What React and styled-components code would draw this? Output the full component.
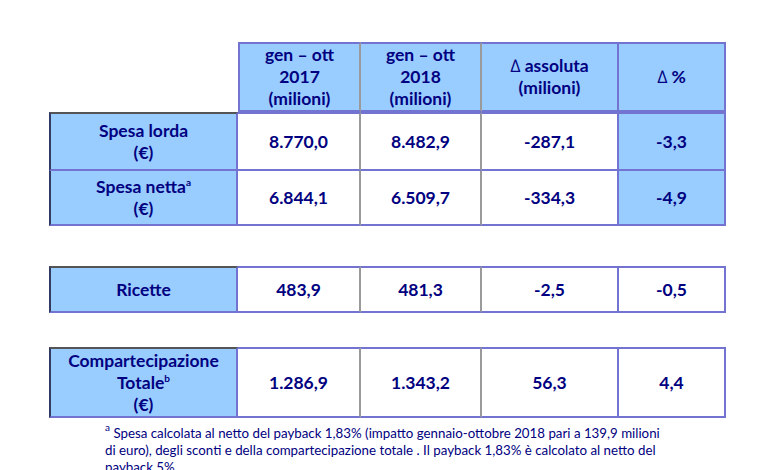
import styled, { createGlobalStyle } from "styled-components";

const Global = createGlobalStyle`
  html, body {
    margin: 0;
    padding: 0;
    background: #ffffff;
  }
  body {
    font-family: Lato, "Open Sans", sans-serif;
    color: #000080;
  }
`;

const COLS = "189px 123px 121px 137px 107px";
const BLUE = "#99ccff";
const EDGE = "#7373d1";
const GREY = "#9a9a9a";

const Page = styled.div`
  padding: 42px 0 0 49px;
  width: 780px;
  height: 470px;
  box-sizing: border-box;
  overflow: hidden;
`;

const Table = styled.div`
  display: grid;
  grid-template-columns: ${COLS};
  width: 677px;
  margin-top: ${(p) => p.$gap || 0}px;
`;

const Cell = styled.div`
  box-sizing: border-box;
  height: ${(p) => p.$h}px;
  display: flex;
  align-items: center;
  justify-content: center;
  text-align: center;
  font-weight: 700;
  font-size: 17.5px;
  line-height: 22px;
  background: ${(p) => (p.$blue ? BLUE : "#ffffff")};
  border-bottom: 2px solid ${EDGE};
  border-right: 2px solid ${(p) => (p.$soft ? GREY : EDGE)};
  border-top: ${(p) => (p.$top ? `2px solid ${p.$topColor || EDGE}` : "none")};
  border-left: ${(p) => (p.$left ? `2px solid ${p.$leftColor || EDGE}` : "none")};
`;

const Blank = styled.div`
  height: ${(p) => p.$h}px;
`;

const Delta = styled.span`
  font-weight: 400;
`;

const Sup = styled.sup`
  font-size: 10px;
  line-height: 0;
  vertical-align: 7px;
`;

const Note = styled.p`
  margin: 7px 0 0 56px;
  font-size: 13.3px;
  line-height: 17px;
  color: #000080;
`;

function Row({ label, values, h, top }) {
  return (
    <>
      <Cell $h={h} $blue $left $leftColor="#333a66" $top={top} $topColor="#555">
        <div>{label}</div>
      </Cell>
      <Cell $h={h} $soft $top={top}>{values[0]}</Cell>
      <Cell $h={h} $soft $top={top}>{values[1]}</Cell>
      <Cell $h={h} $top={top}>{values[2]}</Cell>
      <Cell $h={h} $blue={values.blue} $top={top}>{values[3]}</Cell>
    </>
  );
}

export default function App() {
  const r1 = ["8.770,0", "8.482,9", "-287,1", "-3,3"];
  r1.blue = true;
  const r2 = ["6.844,1", "6.509,7", "-334,3", "-4,9"];
  r2.blue = true;

  return (
    <Page>
      <Global />
      <Table>
        <Blank $h={70} />
        <Cell $h={70} $blue $top $left $soft>
          <div>gen – ott<br />2017<br />(milioni)</div>
        </Cell>
        <Cell $h={70} $blue $top $soft>
          <div>gen – ott<br />2018<br />(milioni)</div>
        </Cell>
        <Cell $h={70} $blue $top>
          <div><Delta>∆</Delta> assoluta<br />(milioni)</div>
        </Cell>
        <Cell $h={70} $blue $top>
          <div><Delta>∆</Delta> %</div>
        </Cell>

        <Row
          h={59}
          top
          label={<>Spesa lorda<br />(€)</>}
          values={r1}
        />
        <Row
          h={55}
          label={<>Spesa netta<Sup>a</Sup><br />(€)</>}
          values={r2}
        />
      </Table>

      <Table $gap={40}>
        <Row h={47} top label="Ricette" values={["483,9", "481,3", "-2,5", "-0,5"]} />
      </Table>

      <Table $gap={34}>
        <Row
          h={71}
          top
          label={<>Compartecipazione<br />Totale<Sup>b</Sup><br />(€)</>}
          values={["1.286,9", "1.343,2", "56,3", "4,4"]}
        />
      </Table>

      <Note>
        <Sup>a</Sup> Spesa calcolata al netto del payback 1,83% (impatto gennaio-ottobre 2018 pari a 139,9 milioni
        <br />
        di euro), degli sconti e della compartecipazione totale . Il payback 1,83% è calcolato al netto del
        <br />
        payback 5%.
      </Note>
    </Page>
  );
}
